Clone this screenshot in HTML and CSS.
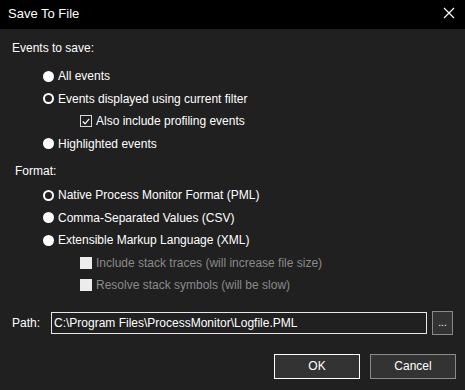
FILE: index.html
```html
<!DOCTYPE html>
<html lang="en">
<head>
    <meta charset="UTF-8">
    <title>Save To File</title>
    <link rel="stylesheet" href="styles.css">
</head>
<body>
    <div class="dialog">
        <div class="titlebar">
            <span class="title">Save To File</span>
            <span class="close">
                <svg width="12" height="12" viewBox="0 0 12 12"><path d="M1 1L11 11M11 1L1 11" stroke="#fff" stroke-width="1.2"/></svg>
            </span>
        </div>

        <div class="content">
            <div class="group-label">Events to save:</div>
            <div class="options events">
                <div class="option"><span class="radio"></span>All events</div>
                <div class="option"><span class="radio checked"></span>Events displayed using current filter</div>
                <div class="option sub"><span class="check checked">
                    <svg width="11" height="11" viewBox="0 0 11 11"><path d="M2 5.5L4.5 8L9 2.5" fill="none" stroke="#fff" stroke-width="1.3"/></svg>
                </span>Also include profiling events</div>
                <div class="option"><span class="radio"></span>Highlighted events</div>
            </div>

            <div class="group-label format">Format:</div>
            <div class="options formats">
                <div class="option"><span class="radio checked"></span>Native Process Monitor Format (PML)</div>
                <div class="option"><span class="radio"></span>Comma-Separated Values (CSV)</div>
                <div class="option"><span class="radio"></span>Extensible Markup Language (XML)</div>
                <div class="option sub disabled"><span class="check"></span>Include stack traces (will increase file size)</div>
                <div class="option sub disabled"><span class="check"></span>Resolve stack symbols (will be slow)</div>
            </div>

            <div class="path-row">
                <label for="path">Path:</label>
                <input type="text" id="path" value="C:\Program Files\ProcessMonitor\Logfile.PML">
                <button class="browse">...</button>
            </div>

            <div class="buttons">
                <button class="btn default">OK</button>
                <button class="btn">Cancel</button>
            </div>
        </div>
    </div>
</body>
</html>
```

FILE: styles.css
```css
body {
    margin: 0;
    background: #202020;
    font-family: "Liberation Sans", Arial, sans-serif;
    font-size: 12px;
    color: #fff;
}
.dialog {
    width: 465px;
    height: 390px;
    background: #202020;
}
.titlebar {
    height: 29px;
    background: #000;
    display: flex;
    align-items: center;
    justify-content: space-between;
    padding: 0 10px 0 8px;
}
.title {
    font-size: 13px;
    margin-top: -3px;
}
.close {
    display: flex;
    margin-top: -3px;
}
.content {
    padding: 11px 9px 0 12px;
}
.group-label {
    height: 16px;
    line-height: 16px;
}
.group-label.format {
    margin-top: 8px;
    padding-left: 3px;
}
.options {
    margin-top: 9px;
    padding-left: 31px;
}
.formats {
    margin-top: 5px;
}
.option {
    height: 22.5px;
    display: flex;
    align-items: center;
}
.option.sub {
    padding-left: 37px;
}
.option.disabled {
    color: #8a8a8a;
}
.radio {
    width: 11px;
    height: 11px;
    border-radius: 50%;
    background: #fff;
    margin-right: 4px;
    box-sizing: border-box;
}
.radio.checked {
    background: #202020;
    border: 2.5px solid #fff;
}
.check {
    width: 12px;
    height: 12px;
    box-sizing: border-box;
    background: #ececec;
    margin-right: 4px;
    display: flex;
    align-items: center;
    justify-content: center;
}
.check.checked {
    background: #202020;
    border: 1px solid #d8d8d8;
}
.path-row {
    margin-top: 14px;
    display: flex;
    align-items: center;
}
.path-row label {
    width: 39px;
}
.path-row input {
    width: 376px;
    height: 22px;
    box-sizing: border-box;
    background: #202020;
    border: 1px solid #e8e8e8;
    color: #fff;
    font: inherit;
    padding: 0 2px;
    outline: none;
}
.browse {
    width: 21px;
    height: 24px;
    margin-left: 5px;
    background: #333;
    border: 1px solid #8a8a8a;
    color: #fff;
    font: inherit;
    font-size: 10px;
    padding: 0;
}
.buttons {
    margin-top: 19px;
    display: flex;
    justify-content: flex-end;
    gap: 10px;
}
.btn {
    width: 86px;
    height: 25px;
    background: #333;
    border: 1px solid #8a8a8a;
    color: #fff;
    font: inherit;
    padding: 0;
}
.btn.default {
    border-color: #fff;
}
```
